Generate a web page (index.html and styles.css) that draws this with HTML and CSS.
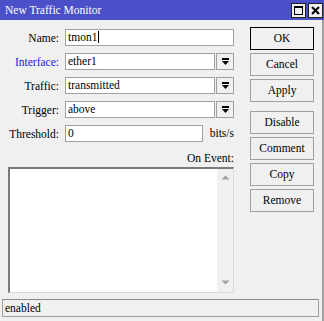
FILE: index.html
```html
<html>
<head>
  <title>New Traffic Monitor</title>
  <link rel="stylesheet" href="styles.css">
</head>
<body>
  <div class="window">
    <div class="titlebar">
      <span class="title">New Traffic Monitor</span>
      <div class="title-buttons">
        <span class="tbtn">
          <svg width="13" height="13" viewBox="0 0 13 13"><rect x="2.5" y="2.5" width="8" height="8" fill="none" stroke="#000" stroke-width="1"/><rect x="2" y="2" width="9" height="2" fill="#000"/></svg>
        </span>
        <span class="tbtn">
          <svg width="13" height="13" viewBox="0 0 13 13"><path d="M3 3 L10 10 M10 3 L3 10" stroke="#000" stroke-width="2"/></svg>
        </span>
      </div>
    </div>

    <div class="content">
      <div class="form">
        <div class="row">
          <span class="label">Name:</span>
          <div class="field"><div class="text">tmon1<span class="caret"></span></div></div>
        </div>
        <div class="row">
          <span class="label link">Interface:</span>
          <div class="field">
            <div class="text">ether1</div>
            <span class="drop"><svg width="9" height="8" viewBox="0 0 9 8"><rect x="1" y="0" width="7" height="2" fill="#000"/><path d="M1 3 H8 L4.5 7 Z" fill="#000"/></svg></span>
          </div>
        </div>
        <div class="row">
          <span class="label">Traffic:</span>
          <div class="field">
            <div class="text">transmitted</div>
            <span class="drop"><svg width="9" height="8" viewBox="0 0 9 8"><rect x="1" y="0" width="7" height="2" fill="#000"/><path d="M1 3 H8 L4.5 7 Z" fill="#000"/></svg></span>
          </div>
        </div>
        <div class="row">
          <span class="label">Trigger:</span>
          <div class="field">
            <div class="text">above</div>
            <span class="drop"><svg width="9" height="8" viewBox="0 0 9 8"><rect x="1" y="0" width="7" height="2" fill="#000"/><path d="M1 3 H8 L4.5 7 Z" fill="#000"/></svg></span>
          </div>
        </div>
        <div class="row">
          <span class="label">Threshold:</span>
          <div class="field">
            <div class="text">0</div>
            <span class="unit">bits/s</span>
          </div>
        </div>

        <div class="event-label">On Event:</div>
        <div class="textarea">
          <div class="scrollbar">
            <svg width="9" height="5" viewBox="0 0 9 5"><path d="M0.5 4.5 H8.5 L4.5 0.5 Z" fill="#a0a0a0"/></svg>
            <svg width="9" height="5" viewBox="0 0 9 5"><path d="M0.5 0.5 H8.5 L4.5 4.5 Z" fill="#a0a0a0"/></svg>
          </div>
        </div>
      </div>

      <div class="buttons">
        <div class="btn default">OK</div>
        <div class="btn">Cancel</div>
        <div class="btn">Apply</div>
        <div class="btn spaced">Disable</div>
        <div class="btn">Comment</div>
        <div class="btn">Copy</div>
        <div class="btn">Remove</div>
      </div>
    </div>

    <div class="status">enabled</div>
  </div>
</body>
</html>
```

FILE: styles.css
```css
body {
  margin: 0;
  background-color: #f0f0f0;
  font-family: "Times New Roman", Tinos, "Liberation Serif", "Noto Serif", FreeSerif, Georgia, serif;
  font-size: 11.5px;
  color: #000;
}

.window {
  width: 324px;
  height: 321px;
  display: flex;
  flex-direction: column;
  box-sizing: border-box;
  border-right: 2px solid #a0a0a0;
}

.titlebar {
  height: 20px;
  background-color: #4b50c8;
  display: flex;
  align-items: center;
  justify-content: space-between;
  padding: 0 1px 0 5px;
  margin-right: -2px;
}

.title {
  color: #fff;
}

.title-buttons {
  display: flex;
  gap: 2px;
}

.tbtn {
  width: 15px;
  height: 15px;
  box-sizing: border-box;
  border: 1px solid #202020;
  background-color: #f0f0f0;
  display: flex;
  align-items: center;
  justify-content: center;
}

.content {
  display: flex;
  padding: 8px 0 0 8px;
  gap: 16px;
}

.form {
  width: 226px;
  padding-top: 1px;
}

.row {
  display: flex;
  align-items: center;
  height: 17px;
  margin-bottom: 7px;
  gap: 6px;
}

.label {
  width: 51px;
  text-align: right;
  white-space: nowrap;
}

.label.link {
  color: #1a1ae6;
}

.field {
  flex: 1;
  display: flex;
  gap: 1px;
  height: 17px;
}

.text {
  flex: 1;
  height: 17px;
  box-sizing: border-box;
  border: 1px solid #a0a0a0;
  background-color: #fff;
  padding: 0 2px;
  line-height: 15px;
}

.caret {
  display: inline-block;
  width: 1px;
  height: 12px;
  background-color: #000;
  vertical-align: -2px;
  margin-left: 1px;
}

.drop {
  width: 18px;
  height: 17px;
  box-sizing: border-box;
  border: 1px solid #a0a0a0;
  background-color: #f0f0f0;
  display: flex;
  align-items: center;
  justify-content: center;
}

.unit {
  width: 30px;
  text-align: right;
  line-height: 17px;
}

.event-label {
  text-align: right;
  height: 18px;
  line-height: 18px;
}

.textarea {
  height: 126px;
  box-sizing: border-box;
  background-color: #fff;
  border: 1px solid #d8d8d8;
  border-top: 2px solid #7a7a7a;
  border-left: 2px solid #7a7a7a;
  display: flex;
  justify-content: flex-end;
}

.scrollbar {
  width: 16px;
  background-color: #f0f0f0;
  display: flex;
  flex-direction: column;
  align-items: center;
  justify-content: space-between;
  padding: 6px 0 7px;
}

.buttons {
  display: flex;
  flex-direction: column;
  gap: 3px;
  width: 64px;
  margin-top: -1px;
}

.btn {
  height: 23px;
  box-sizing: border-box;
  border: 1px solid #a0a0a0;
  background-color: #f0f0f0;
  text-align: center;
  line-height: 21px;
}

.btn.default {
  border-color: #000;
}

.btn.spaced {
  margin-top: 6px;
}

.status {
  margin: auto 3px 4px 2px;
  height: 18px;
  box-sizing: border-box;
  border: 1px solid #a0a0a0;
  border-top-color: #8a8a8a;
  padding-left: 2px;
  line-height: 16px;
}
```
